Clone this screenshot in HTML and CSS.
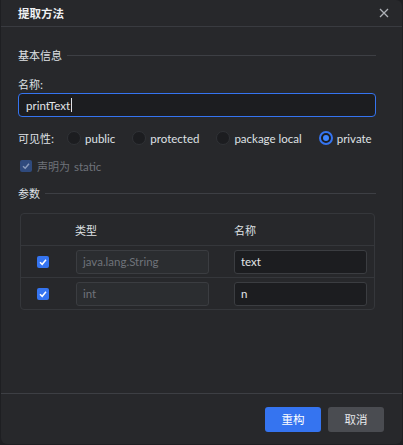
FILE: index.html
```html
<!DOCTYPE html>
<html lang="zh">
<head>
<meta charset="utf-8">
<link rel="stylesheet" href="styles.css">
</head>
<body>
<div class="dialog">
  <div class="titlebar">
    <span class="title">提取方法</span>
    <svg class="close" width="10" height="10" viewBox="0 0 10 10"><path d="M1 1L9 9M9 1L1 9" stroke="#aeb1b7" stroke-width="1.3" fill="none"/></svg>
  </div>
  <div class="content">
    <div class="section"><span>基本信息</span><div class="rule"></div></div>
    <div class="label">名称:</div>
    <div class="name-input">printText<span class="caret"></span></div>
    <div class="visibility">
      <span class="vis-label">可见性:</span>
      <label class="radio"><span class="dot"></span>public</label>
      <label class="radio"><span class="dot"></span>protected</label>
      <label class="radio"><span class="dot"></span>package local</label>
      <label class="radio"><span class="dot on"></span>private</label>
    </div>
    <div class="static-row">
      <span class="cb disabled"><svg width="10" height="10" viewBox="0 0 10 10"><path d="M2 5.2L4.2 7.3L8 2.8" stroke="#8a9bbd" stroke-width="1.4" fill="none"/></svg></span>
      <span class="cn">声明为</span><span class="lat">static</span>
    </div>
    <div class="section params"><span>参数</span><div class="rule"></div></div>
    <div class="table">
      <div class="row head">
        <div class="c1"></div>
        <div class="c2">类型</div>
        <div class="c3">名称</div>
      </div>
      <div class="row">
        <div class="c1"><span class="cb"><svg width="10" height="10" viewBox="0 0 10 10"><path d="M2 5.2L4.2 7.3L8 2.8" stroke="#fff" stroke-width="1.5" fill="none"/></svg></span></div>
        <div class="c2"><div class="field ro">java.lang.String</div></div>
        <div class="c3"><div class="field">text</div></div>
      </div>
      <div class="row">
        <div class="c1"><span class="cb"><svg width="10" height="10" viewBox="0 0 10 10"><path d="M2 5.2L4.2 7.3L8 2.8" stroke="#fff" stroke-width="1.5" fill="none"/></svg></span></div>
        <div class="c2"><div class="field ro">int</div></div>
        <div class="c3"><div class="field">n</div></div>
      </div>
    </div>
  </div>
  <div class="footer">
    <button class="btn primary">重构</button>
    <button class="btn">取消</button>
  </div>
</div>
</body>
</html>
```
FILE: styles.css
```css
html, body {
  margin: 0;
  padding: 0;
  background: #1e1f22;
  width: 403px;
  height: 445px;
  overflow: hidden;
}
body {
  font-family: "Noto Sans CJK SC", sans-serif;
  font-size: 11px;
  color: #dfe1e5;
}
.lat, .radio, .name-input, .field {
  font-family: "Lato", "Noto Sans CJK SC", sans-serif;
  font-size: 11.5px;
}
.dialog {
  margin-left: 1px;
  width: 401px;
  height: 444px;
  background: #27282b;
  border-radius: 0 6px 6px 6px;
  display: flex;
  flex-direction: column;
  box-sizing: border-box;
}
.titlebar {
  height: 26px;
  border-bottom: 1px solid #393b40;
  display: flex;
  align-items: center;
  justify-content: space-between;
  padding: 0 13px 0 17px;
}
.title {
  font-size: 11.5px;
  font-weight: 700;
  color: #eef0f3;
}
.close { display: block; }
.content {
  padding: 19px 26px 0 17px;
  flex: 1;
}
.section {
  display: flex;
  align-items: center;
  gap: 5px;
  height: 18px;
  color: #dfe1e5;
}
.section .rule {
  flex: 1;
  height: 1px;
  background: #3d3f44;
}
.label {
  margin-top: 11px;
  height: 18px;
  line-height: 18px;
}
.name-input {
  height: 24px;
  border: 1px solid #3574f0;
  border-radius: 4px;
  background: #1c1d20;
  box-sizing: border-box;
  padding-left: 7px;
  display: flex;
  align-items: center;
  color: #e3e5e9;
}
.caret {
  display: inline-block;
  width: 1px;
  height: 14px;
  background: #dfe1e5;
  margin-left: 1px;
}
.visibility {
  margin-top: 12px;
  height: 18px;
  display: flex;
  align-items: center;
}
.vis-label {
  margin-right: 13px;
}
.radio {
  display: flex;
  align-items: center;
  gap: 4px;
  margin-right: 17px;
}
.radio:last-child { margin-right: 0; }
.dot {
  width: 14px;
  height: 14px;
  border-radius: 50%;
  background: #1c1d20;
  border: 1px solid #303236;
  box-sizing: border-box;
  position: relative;
}
.dot.on {
  border: 2px solid #3574f0;
  background: #1c1d20;
}
.dot.on::after {
  content: "";
  position: absolute;
  left: 2px;
  top: 2px;
  width: 6px;
  height: 6px;
  border-radius: 50%;
  background: #3d85ff;
}
.static-row {
  margin-top: 10px;
  height: 18px;
  display: flex;
  align-items: center;
  color: #6f737a;
  padding-left: 2px;
}
.static-row .cb { margin-right: 5px; }
.static-row .lat { margin-left: 4px; }
.cb {
  width: 12px;
  height: 12px;
  border-radius: 2px;
  background: #3574f0;
  display: flex;
  align-items: center;
  justify-content: center;
}
.cb.disabled { background: #2f4a7d; }
.cb svg { display: block; }
.section.params { margin-top: 9px; }
.table {
  margin-top: 11px;
  margin-left: 2px;
  margin-right: 1px;
  border: 1px solid #35373b;
  border-radius: 4px;
}
.row {
  display: flex;
  align-items: center;
  height: 31px;
  border-top: 1px solid #35373b;
}
.row.head {
  border-top: none;
  height: 31px;
  color: #dfe1e5;
}
.row:last-child { height: 31px; }
.c1 {
  width: 39px;
  padding-left: 16px;
  display: flex;
}
.c2 { width: 133px; margin-right: 25px; }
.row.head .c2 { margin-left: -1px; margin-right: 26px; }
.c3 { width: 133px; }
.field {
  height: 24px;
  border: 1px solid #3b3d41;
  border-radius: 3px;
  background: #1c1d20;
  box-sizing: border-box;
  padding-left: 6px;
  display: flex;
  align-items: center;
  color: #e3e5e9;
}
.field.ro {
  background: #2b2d30;
  color: #6f737a;
}
.footer {
  border-top: 1px solid #3d3f44;
  height: 50px;
  display: flex;
  justify-content: flex-end;
  align-items: center;
  gap: 7px;
  padding: 0 18px 0 0;
}
.btn {
  width: 56px;
  height: 25px;
  border: none;
  border-radius: 3px;
  background: #4a4c51;
  color: #e8eaed;
  font-family: "Noto Sans CJK SC", sans-serif;
  font-size: 11.5px;
  padding: 0;
}
.btn.primary { background: #3574f0; color: #fff; }
```
